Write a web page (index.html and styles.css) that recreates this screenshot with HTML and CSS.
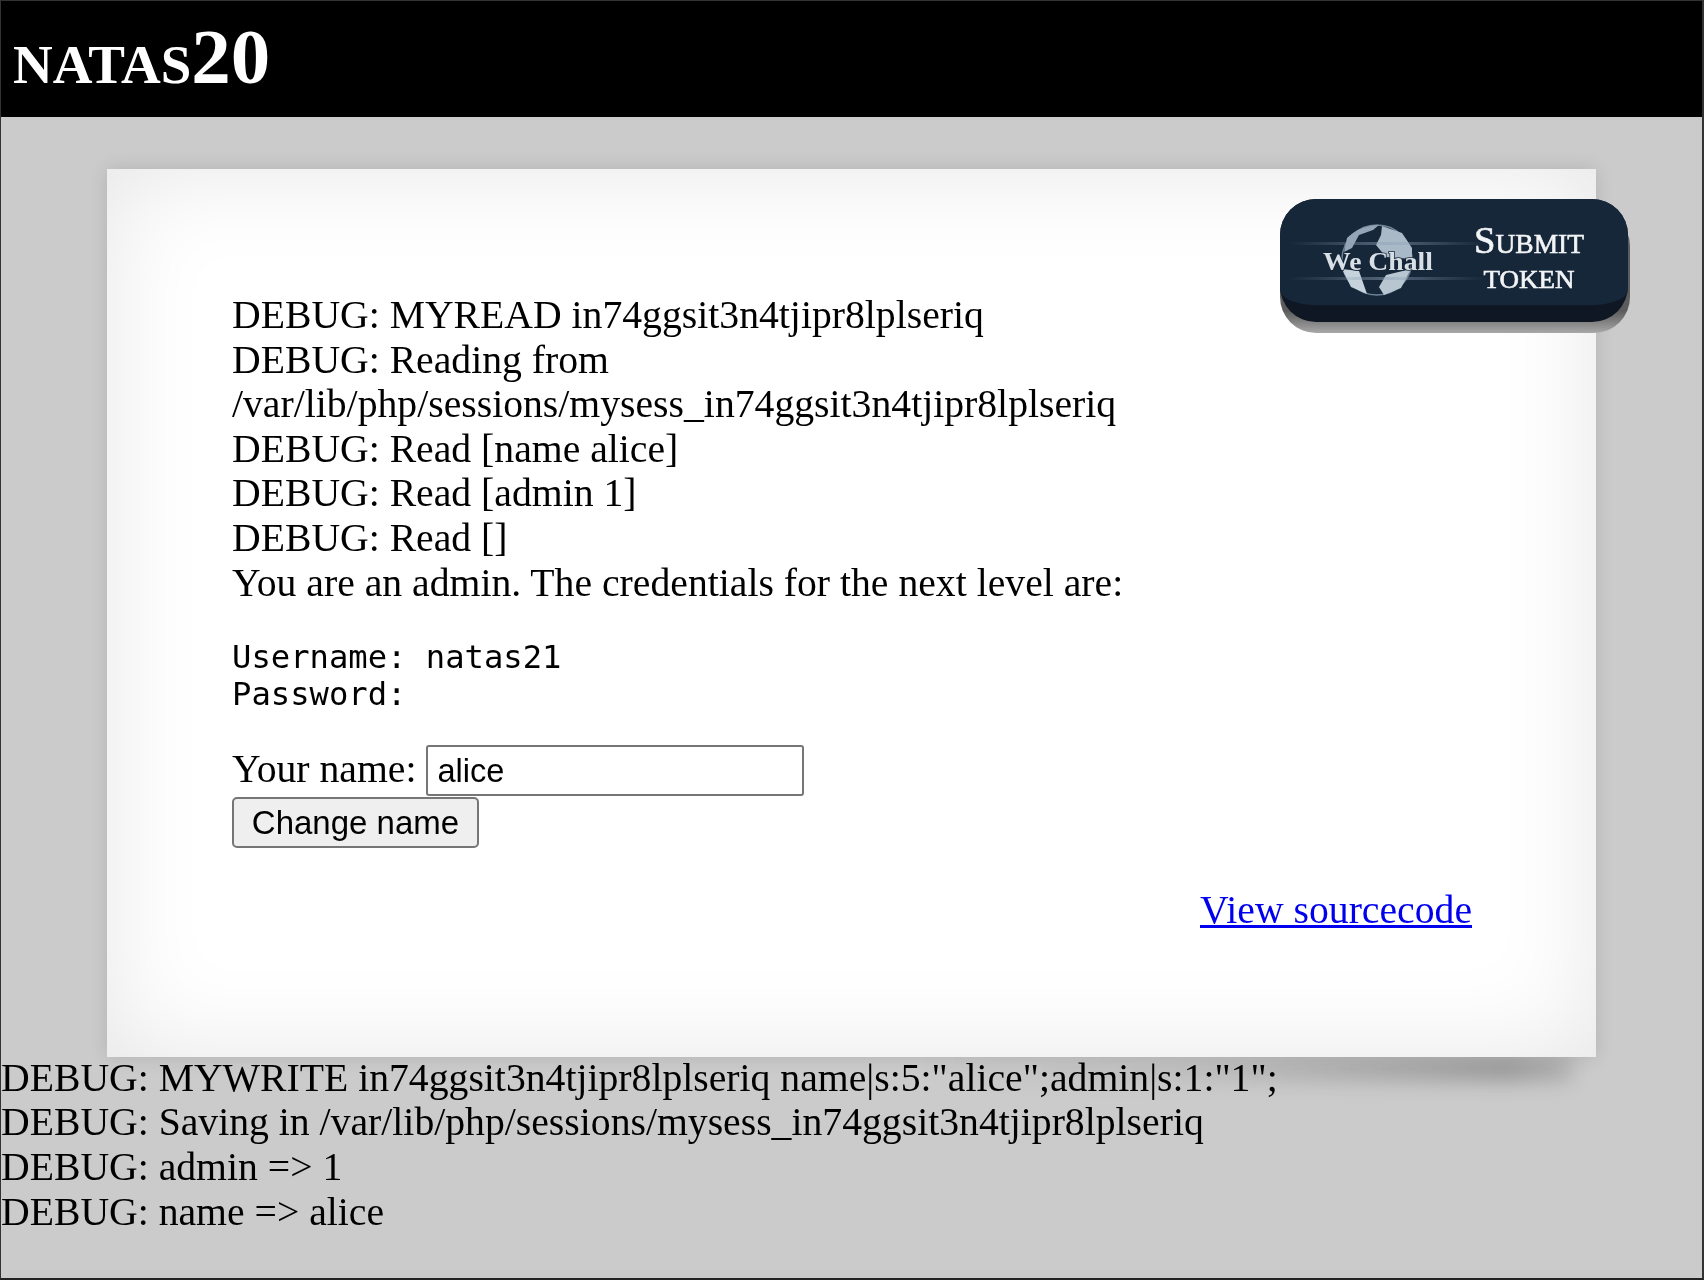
FILE: index.html
```html
<!DOCTYPE html>
<html>
<head>
<meta charset="utf-8">
<title>natas20</title>
<link rel="stylesheet" href="styles.css">
</head>
<body>
<div class="frame">
  <h1 class="banner">natas20</h1>
  <div class="card">
    <a class="wechall" href="#">
      <svg class="wechall-svg" viewBox="0 0 352 136" width="352" height="136">
        <defs>
          <linearGradient id="streak" x1="0" x2="1" y1="0" y2="0">
            <stop offset="0" stop-color="#8fa4b8" stop-opacity="0"/>
            <stop offset="0.5" stop-color="#8fa4b8" stop-opacity=".5"/>
            <stop offset="1" stop-color="#8fa4b8" stop-opacity="0"/>
          </linearGradient>
          <linearGradient id="rim" x1="0" x2="0" y1="0" y2="1">
            <stop offset="0.82" stop-color="#5c5c5c"/>
            <stop offset="1" stop-color="#a8a8a8"/>
          </linearGradient>
        </defs>
        <rect x="1" y="11" width="350" height="123" rx="36" fill="url(#rim)"/>
        <rect x="1" y="0" width="348" height="123" rx="36" fill="#0e1723"/>
        <path d="M1 36 A36 36 0 0 1 37 0 H313 A36 36 0 0 1 349 36 V90 C349 100 331 106 313 106 H37 C19 106 1 100 1 90 Z" fill="#17273a"/>
        <circle cx="98" cy="61" r="35" fill="none" stroke="#6f8296" stroke-width="1.5"/>
        <path d="M68 39 C76 31 88 26 100 26 L94 31 L80 36 L73 49 L65 53 Z" fill="#93a5b6"/>
        <path d="M103 27 L123 34 L133 49 L133 60 L107 58 L97 46 L102 36 Z" fill="#a9b9c7"/>
        <path d="M63 70 L80 72 L88 95 L72 88 Z" fill="#c6d2dc"/>
        <path d="M107 76 L132 70 L122 89 L105 96 L100 88 Z" fill="#b8c6d2"/>
        <rect x="10" y="43" width="196" height="3" fill="url(#streak)"/>
        <rect x="10" y="78" width="196" height="3" fill="url(#streak)"/>
        <text class="wc-logo" x="99" y="71" text-anchor="middle" textLength="110" lengthAdjust="spacingAndGlyphs">We Chall</text>
        <text class="wc-submit" x="250" y="54" text-anchor="middle" textLength="110" lengthAdjust="spacingAndGlyphs">Submit</text>
        <text class="wc-token" x="250" y="89" text-anchor="middle" textLength="91" lengthAdjust="spacingAndGlyphs">TOKEN</text>
      </svg>
    </a>
    <div class="debug-lines">DEBUG: MYREAD in74ggsit3n4tjipr8lplseriq<br>DEBUG: Reading from /var/lib/php/sessions/mysess_in74ggsit3n4tjipr8lplseriq<br>DEBUG: Read [name alice]<br>DEBUG: Read [admin 1]<br>DEBUG: Read []<br>You are an admin. The credentials for the next level are:<br></div>
    <pre class="creds">Username: natas21
Password: </pre>
    <form class="name-form">
      <div class="name-row">Your name: <input class="name-input" type="text" value="alice"></div>
      <button class="name-submit" type="button">Change name</button>
    </form>
    <div class="source-row"><a class="source-link" href="#">View sourcecode</a></div>
  </div>
  <div class="debug-lines footer-debug">DEBUG: MYWRITE in74ggsit3n4tjipr8lplseriq name|s:5:"alice";admin|s:1:"1";<br>DEBUG: Saving in /var/lib/php/sessions/mysess_in74ggsit3n4tjipr8lplseriq<br>DEBUG: admin =&gt; 1<br>DEBUG: name =&gt; alice</div>
</div>
</body>
</html>
```
FILE: styles.css
```css
html, body {
  margin: 0;
  padding: 0;
  height: 100%;
  background: #222;
}
body {
  font-family: "Liberation Serif", "Times New Roman", serif;
  font-size: 39.7px;
  color: #000;
  overflow: hidden;
}
.frame {
  box-sizing: border-box;
  height: 1280px;
  background: #cbcbcb;
  border: 1px solid #333;
  border-right-width: 2px;
  border-bottom: 2px solid #222;
  filter: blur(0.5px);
}
.banner {
  margin: 0;
  box-sizing: border-box;
  height: 116px;
  background: #000;
  color: #fff;
  font-size: 79px;
  line-height: 92px;
  font-weight: bold;
  font-variant: small-caps;
  padding: 10px 0 0 12px;
}
.card {
  position: relative;
  box-sizing: border-box;
  width: 1489px;
  margin: 52px auto 0;
  padding: 124px 124px 124px 125px;
  background: #fff;
  box-shadow: inset 0 0 100px rgba(0,0,0,.1), 0 0 18px rgba(0,0,0,.12);
}
.card::after {
  content: "";
  position: absolute;
  z-index: -1;
  right: 24px;
  top: 100%;
  width: 44%;
  height: 24px;
  background: linear-gradient(to right, rgba(0,0,0,0), rgba(0,0,0,.08) 45%, rgba(0,0,0,.26) 90%, rgba(0,0,0,.14));
  filter: blur(10px);
}
.wechall {
  position: absolute;
  top: 30px;
  right: -35px;
  display: block;
}
.wechall-svg {
  display: block;
}
.wc-logo {
  font-family: "Liberation Serif", serif;
  font-weight: bold;
  font-size: 26px;
  fill: #d8dfe5;
  stroke: #17273a;
  stroke-width: 1.5px;
  paint-order: stroke;
}
.wc-submit {
  font-family: "Liberation Serif", serif;
  font-variant: small-caps;
  font-size: 38px;
  fill: #f2f4f6;
  stroke: #f2f4f6;
  stroke-width: 0.6px;
}
.wc-token {
  font-family: "Liberation Serif", serif;
  font-size: 26px;
  fill: #f2f4f6;
  stroke: #f2f4f6;
  stroke-width: 0.6px;
}
.debug-lines {
  line-height: 44.6px;
}
.creds {
  margin: 34px 0 32px;
  font-family: "DejaVu Sans Mono", monospace;
  font-size: 32.2px;
  line-height: 37px;
}
.name-row {
  display: flex;
  align-items: baseline;
  gap: 10px;
  height: 52px;
}
.name-input {
  box-sizing: border-box;
  width: 378px;
  height: 51px;
  padding: 0 9px;
  margin: 0;
  border: 2px solid #767676;
  border-radius: 3px;
  background: #fff;
  font-family: "Liberation Sans", Arial, sans-serif;
  font-size: 32.6px;
  color: #000;
}
.name-submit {
  display: block;
  box-sizing: border-box;
  width: 247px;
  height: 51px;
  padding: 0;
  border: 2px solid #767676;
  border-radius: 5px;
  background: #efefef;
  font-family: "Liberation Sans", Arial, sans-serif;
  font-size: 33px;
  color: #000;
}
.source-row {
  margin-top: 40px;
  text-align: right;
  line-height: 44.6px;
}
.source-link {
  color: #0000ee;
}
.footer-debug {
  margin-top: -1px;
}
```
